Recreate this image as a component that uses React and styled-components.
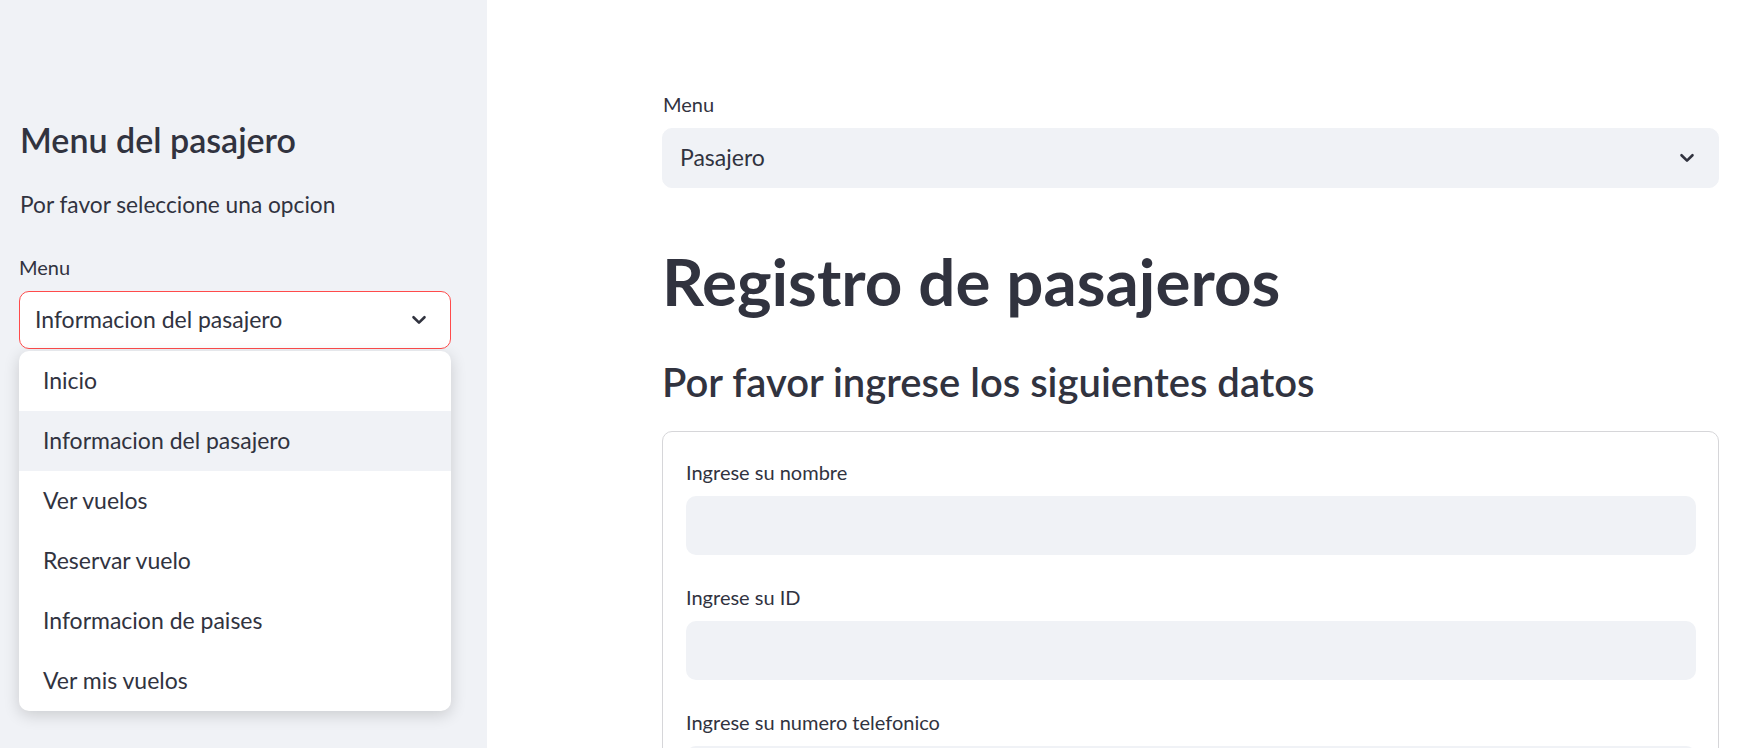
import React from "react";
import styled, { createGlobalStyle } from "styled-components";

const GlobalStyle = createGlobalStyle`
  html, body {
    margin: 0;
    height: 100%;
    overflow: hidden;
    background: #ffffff;
    font-family: Lato, "Noto Sans", sans-serif;
    color: #31333f;
  }
  * { box-sizing: border-box; }
`;

const Page = styled.div`
  display: flex;
  height: 100vh;
`;

const Sidebar = styled.aside`
  flex: 0 0 487px;
  background-color: #f0f2f6;
  padding: 120px 36px 0 19px;
`;

const SideTitle = styled.h2`
  margin: 0 0 30px 1px;
  font-size: 34px;
  font-weight: 600;
  line-height: 1.2;
`;

const SideText = styled.p`
  margin: 0 0 37px 1px;
  font-size: 22.7px;
  line-height: 1.2;
`;

const Label = styled.div`
  font-size: 20px;
  line-height: 1.2;
  margin: 0 0 12px ${(p) => (p.$inset ? "0" : "1px")};
`;

const SelectWrap = styled.div`
  position: relative;
`;

const SelectBox = styled.div`
  height: ${(p) => (p.$open ? "58px" : "60px")};
  display: flex;
  align-items: center;
  justify-content: space-between;
  padding: 0 23px 0 ${(p) => (p.$open ? "15px" : "17px")};
  border-radius: 10px;
  border: 1px solid ${(p) => (p.$open ? "#ff4b4b" : "#f0f2f6")};
  background-color: ${(p) => (p.$open ? "#ffffff" : "#f0f2f6")};
  font-size: 23px;
  line-height: 1.2;
`;

const Chevron = () => (
  <svg width="16" height="16" viewBox="0 0 16 16" fill="none">
    <path
      d="M2.5 5.2 L8 10.6 L13.5 5.2"
      stroke="#31333f"
      strokeWidth="2.6"
      strokeLinecap="round"
      strokeLinejoin="round"
    />
  </svg>
);

const Dropdown = styled.ul`
  position: absolute;
  top: calc(100% + 2px);
  left: 0;
  right: 0;
  margin: 0;
  padding: 0;
  list-style: none;
  background: #ffffff;
  border-radius: 10px;
  overflow: hidden;
  box-shadow: 0 4px 16px rgba(0, 0, 0, 0.16);
  z-index: 10;
`;

const Option = styled.li`
  height: 60px;
  display: flex;
  align-items: center;
  padding-left: 24px;
  font-size: 23px;
  line-height: 1.2;
  background-color: ${(p) => (p.$active ? "#f0f2f6" : "transparent")};
`;

const Main = styled.main`
  flex: 1;
  padding: 92px 42px 0 175px;
`;

const Title = styled.h1`
  margin: 54px 0 37px 0;
  font-size: 65.5px;
  font-weight: 700;
  line-height: 1.2;
`;

const Subtitle = styled.h2`
  margin: 0 0 25px 0;
  font-size: 40px;
  font-weight: 600;
  line-height: 1.2;
`;

const FormCard = styled.div`
  border: 1px solid #d6d6d9;
  border-radius: 10px;
  padding: 28px 22px 20px 23px;
`;

const Field = styled.div`
  margin-bottom: 30px;
`;

const Input = styled.div`
  height: 59px;
  border-radius: 10px;
  background-color: #f0f2f6;
`;

const options = [
  "Inicio",
  "Informacion del pasajero",
  "Ver vuelos",
  "Reservar vuelo",
  "Informacion de paises",
  "Ver mis vuelos",
];

const fields = ["Ingrese su nombre", "Ingrese su ID", "Ingrese su numero telefonico"];

export default function App() {
  return (
    <>
      <GlobalStyle />
      <Page>
        <Sidebar>
          <SideTitle>Menu del pasajero</SideTitle>
          <SideText>Por favor seleccione una opcion</SideText>
          <Label $inset>Menu</Label>
          <SelectWrap>
            <SelectBox $open>
              <span>Informacion del pasajero</span>
              <Chevron />
            </SelectBox>
            <Dropdown>
              {options.map((o) => (
                <Option key={o} $active={o === "Informacion del pasajero"}>
                  {o}
                </Option>
              ))}
            </Dropdown>
          </SelectWrap>
        </Sidebar>
        <Main>
          <Label>Menu</Label>
          <SelectBox>
            <span>Pasajero</span>
            <Chevron />
          </SelectBox>
          <Title>Registro de pasajeros</Title>
          <Subtitle>Por favor ingrese los siguientes datos</Subtitle>
          <FormCard>
            {fields.map((f) => (
              <Field key={f}>
                <Label $inset>{f}</Label>
                <Input />
              </Field>
            ))}
          </FormCard>
        </Main>
      </Page>
    </>
  );
}
